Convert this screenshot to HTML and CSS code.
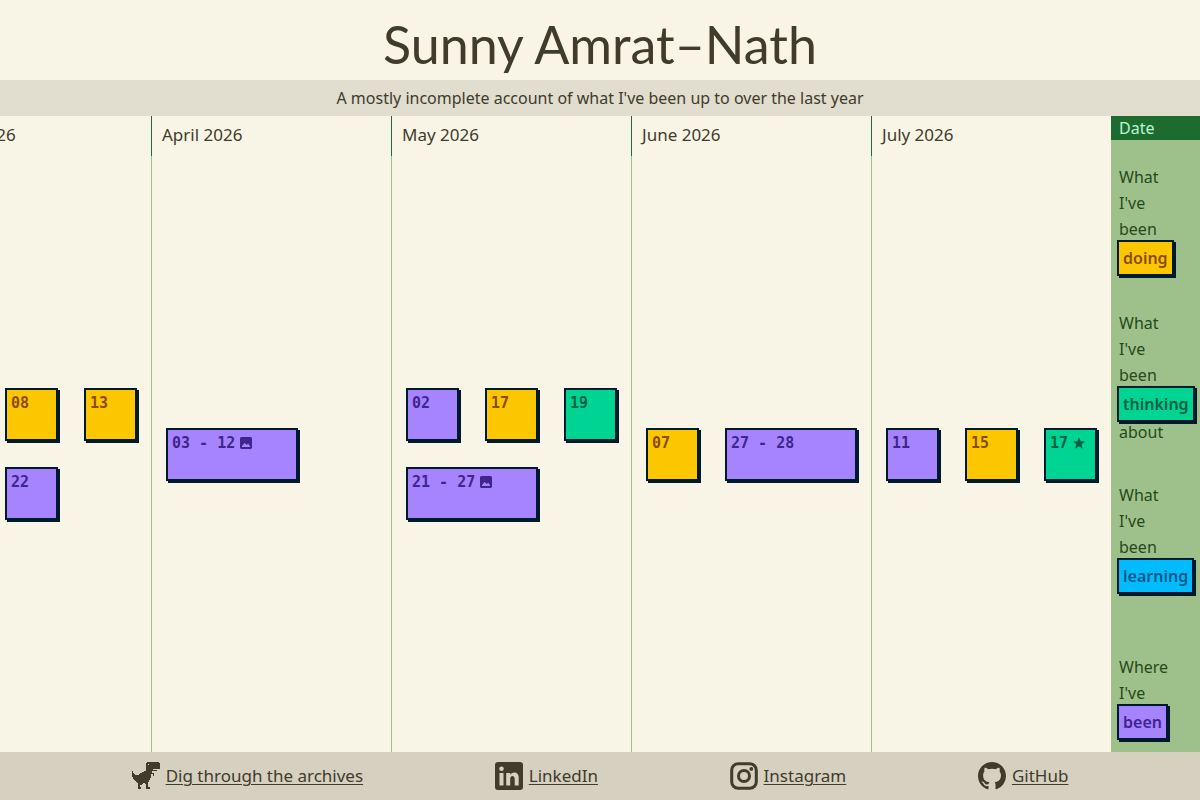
FILE: index.html
```html
<!DOCTYPE html>
<html lang="en">
<head>
<meta charset="utf-8">
<meta name="viewport" content="width=device-width, initial-scale=1">
<title>Sunny Amrat-Nath</title>
<link rel="stylesheet" href="styles.css">
</head>
<body>
<svg class="sprite" aria-hidden="true">
  <symbol id="photo" viewBox="0 0 12 12"><path fill-rule="evenodd" d="M1 0h10l1 1v10l-1 1H1l-1-1V1zM2 10h8V9L8 6.500 7 8 4.500 6 2 9z"/></symbol>
  <symbol id="star" viewBox="0 0 24 24"><path d="M12 0l3.300 8.300 8.700.7-6.700 5.700 2.200 8.800L12 18.700l-7.500 4.800 2.200-8.800L0 9l8.700-.7z"/></symbol>
</svg>
<header class="title"><h1>Sunny Amrat–Nath</h1></header>
<p class="tagline">A mostly incomplete account of what I've been up to over the last year</p>
<main class="main">
  <div class="timeline">
    <section class="month"><h2>March 2026</h2><div class="events">
      <button class="event doing second">08</button><button class="event doing">13</button><button class="event been second">22</button>
    </div></section>
    <section class="month"><h2>April 2026</h2><div class="events">
      <button class="event been wide">03 - 12<svg class="mark"><use href="#photo"/></svg></button>
    </div></section>
    <section class="month"><h2>May 2026</h2><div class="events">
      <button class="event been">02</button><button class="event doing">17</button><button class="event thinking">19</button><button class="event been wide">21 - 27<svg class="mark"><use href="#photo"/></svg></button>
    </div></section>
    <section class="month"><h2>June 2026</h2><div class="events">
      <button class="event doing">07</button><button class="event been wide">27 - 28</button>
    </div></section>
    <section class="month"><h2>July 2026</h2><div class="events">
      <button class="event been">11</button><button class="event doing">15</button><button class="event thinking">17<svg class="mark"><use href="#star"/></svg></button>
    </div></section>
  </div>
  <aside class="key">
    <h2>Date</h2>
    <div class="key-list">
      <p><span>What</span><span>I've</span><span>been</span><button class="tag doing">doing</button></p>
      <p><span>What</span><span>I've</span><span>been</span><button class="tag thinking">thinking</button><span>about</span></p>
      <p class="spaced"><span>What</span><span>I've</span><span>been</span><button class="tag learning">learning</button></p>
      <p><span>Where</span><span>I've</span><button class="tag been">been</button></p>
    </div>
  </aside>
</main>
<footer class="footer">
  <a href="#archives"><svg class="icon" viewBox="0 0 28 28"><path fill-rule="evenodd" d="M15 0H27V1H28V7H21V8H25V9H20V11H22V14H21V12H19V16H18V18H17V20H16V25H18V27H14V22H13V21H11V22H10V23H8V25H9V27H6V21H5V20H4V19H3V18H2V17H1V15H0V9H1V11H2V12H3V13H7V12H8V11H10V10H12V9H14V1H15zM16 2V3H17V2z"/></svg><span>Dig through the archives</span></a>
  <a href="#linkedin"><svg class="icon" viewBox="0 0 28 28"><path fill-rule="evenodd" d="M3 0h22a3 3 0 0 1 3 3v22a3 3 0 0 1-3 3H3a3 3 0 0 1-3-3V3a3 3 0 0 1 3-3zM4.500 11v12.500h4V11zM6.500 4.500a2.300 2.300 0 1 0 0 4.600 2.300 2.300 0 0 0 0-4.600zM11.200 11v12.500h4v-6.600c0-3.800 4.500-3.600 4.500-.2v6.800h4v-8c0-6-6-6.200-8.500-2.800V11z"/></svg><span>LinkedIn</span></a>
  <a href="#instagram"><svg class="icon" viewBox="0 0 28 28"><rect x="1.700" y="1.700" width="24.600" height="24.600" rx="6.500" fill="none" stroke="currentColor" stroke-width="3"/><circle cx="14" cy="14" r="5.500" fill="none" stroke="currentColor" stroke-width="3"/><circle cx="21.300" cy="6.900" r="1.900"/></svg><span>Instagram</span></a>
  <a href="#github"><svg class="icon" viewBox="0 0 16 16"><path d="M8 0C3.580 0 0 3.580 0 8c0 3.540 2.290 6.530 5.470 7.590.4.070.55-.17.55-.38 0-.19-.01-.82-.01-1.490-2.010.37-2.530-.49-2.690-.94-.09-.23-.48-.94-.82-1.130-.28-.15-.68-.52-.01-.53.63-.01 1.080.58 1.230.82.72 1.210 1.870.87 2.330.66.07-.52.28-.87.51-1.070-1.780-.2-3.640-.89-3.640-3.950 0-.87.31-1.590.82-2.150-.08-.2-.36-1.020.08-2.120 0 0 .67-.21 2.200.82a7.600 7.600 0 0 1 4 0c1.530-1.040 2.200-.82 2.200-.82.44 1.100.16 1.920.08 2.120.51.56.82 1.270.82 2.150 0 3.070-1.870 3.750-3.650 3.950.29.25.54.73.54 1.480 0 1.070-.01 1.930-.01 2.200 0 .21.15.46.55.38A8 8 0 0 0 16 8c0-4.420-3.580-8-8-8z"/></svg><span>GitHub</span></a>
</footer>
</body>
</html>
```
FILE: styles.css
```css
* { box-sizing: border-box; }
body {
  margin: 0;
  min-height: 100vh;
  display: flex;
  flex-direction: column;
  background: #f9f5e6;
  color: #403b2b;
  font: 16px/26px "Noto Sans", sans-serif;
}
h1, h2, p { margin: 0; font-weight: 400; }
button { font: inherit; text-align: left; cursor: pointer; }
.sprite { display: none; }
.title { height: 80px; padding-top: 8px; text-align: center; }
.title h1 { font: 52px/72px Lato, sans-serif; }
.tagline { padding: 5px 16px; background: #e1ddcf; text-align: center; }
.main { flex: 1; display: flex; }
.timeline { flex: 1; min-width: 0; display: flex; justify-content: flex-end; overflow: hidden; }
.month { flex: 0 0 240px; display: flex; flex-direction: column; }
.month h2 { height: 40px; padding: 6px 10px; border-left: 1px solid #25663f; font-size: 17px; }
.events {
  flex: 1;
  display: grid;
  grid-template-columns: repeat(3, 53px);
  grid-auto-rows: 53px;
  gap: 26px;
  align-content: center;
  padding: 0 14px;
  border-left: 1px solid #9ec18c;
}
.event {
  display: flex;
  align-items: center;
  padding: 0 4px 23px;
  border: 2px solid #001a2b;
  box-shadow: 2px 2px #001a2b;
  font: bold 15px/24px "DejaVu Sans Mono", monospace;
  white-space: pre;
}
.wide { grid-column: span 2; }
.second { grid-column-start: 2; }
.mark { flex: none; width: 12px; height: 12px; margin-left: 5px; fill: currentColor; }
.doing { background: #fdc700; color: #894b00; }
.been { background: #a684ff; color: #40258c; }
.thinking { background: #00d492; color: #006045; }
.learning { background: #00bcff; color: #075985; }
.key { flex: 0 0 89px; min-width: 0; background: #9ec18c; color: #26491a; }
.key h2 { padding: 0 8px; background: #1e6b30; color: #b9f8cf; font-size: 16px; line-height: 24px; }
.key-list { display: flex; flex-direction: column; gap: 37px; padding: 24px 4px 15px 8px; }
.key-list span { display: block; }
.spaced { padding-bottom: 26px; }
.tag {
  display: block;
  margin: -2px 0 -3px -2px;
  padding: 3px 4px;
  border: 2px solid #001a2b;
  box-shadow: 2px 2px #001a2b;
  font-weight: 600;
  line-height: 26px;
}
.footer { display: flex; justify-content: space-evenly; align-items: center; min-height: 48px; background: #d5d0c0; font-size: 17px; }
.footer a { display: flex; align-items: center; gap: 6px; color: inherit; text-decoration-thickness: 1px; text-underline-offset: 2px; }
.icon { width: 28px; height: 28px; fill: currentColor; }
```
